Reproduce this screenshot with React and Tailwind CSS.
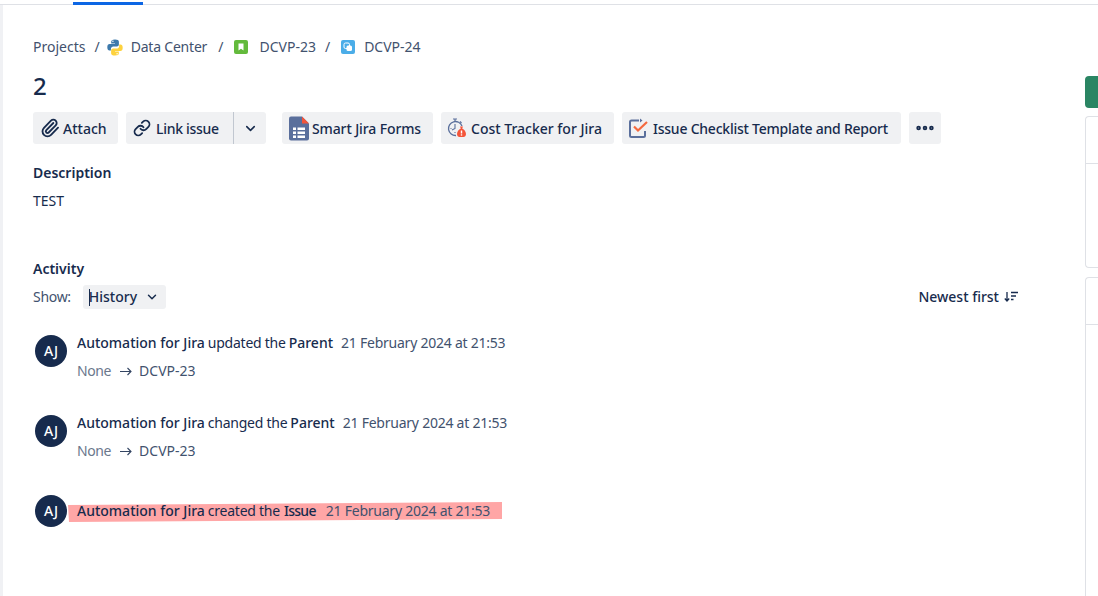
import { Link, Paperclip, ChevronDown, MoreHorizontal, ArrowRight } from "lucide-react";

const FONT = "font-['Noto_Sans',sans-serif]";

function ActionButton({ icon, label, className = "", labelClassName = "" }) {
  return (
    <button className={`flex h-8 items-center rounded-[3px] bg-[#f0f1f3] text-sm font-medium text-[#172b4d] ${className}`}>
      {icon}
      <span className={`pt-px ${labelClassName}`}>{label}</span>
    </button>
  );
}

function PythonIcon() {
  return (
    <svg width="16" height="17" viewBox="0 0 16 17">
      <path d="M8 .5c-3 0-3.800 1-3.800 2.300V4.500H8v.6H2.600C1.200 5.100.3 6.200.3 8.300c0 2.200.9 3.300 2.200 3.300h1.400V9.800c0-1.300 1.100-2.400 2.500-2.400h3.500c1.100 0 2-.9 2-2V2.800C11.900 1.400 10.600.5 8 .5z" fill="#3d79ab" />
      <circle cx="5.900" cy="2.300" r=".7" fill="#fff" />
      <path d="M8 16.500c3 0 3.800-1 3.800-2.300v-1.700H8v-.6h5.400c1.400 0 2.300-1.100 2.300-3.200 0-2.200-.9-3.300-2.200-3.300h-1.400v1.800c0 1.300-1.100 2.400-2.500 2.400H6.100c-1.100 0-2 .9-2 2v2.600c0 1.400 1.300 2.300 3.900 2.300z" fill="#fdd23e" />
      <circle cx="10.100" cy="14.700" r=".7" fill="#fff" />
    </svg>
  );
}

function StoryIcon() {
  return (
    <svg width="14" height="14" viewBox="0 0 14 14">
      <rect width="14" height="14" rx="2" fill="#63ba3c" />
      <path d="M4.500 3.500h5v7L7 8.700l-2.500 1.800z" fill="#fff" />
    </svg>
  );
}

function SubtaskIcon() {
  return (
    <svg width="14" height="14" viewBox="0 0 14 14">
      <rect width="14" height="14" rx="2" fill="#4bade8" />
      <rect x="3" y="3" width="5.500" height="5.500" rx="1.500" fill="none" stroke="#fff" strokeWidth="1" />
      <rect x="5.500" y="5.500" width="5.500" height="5.500" rx="1.500" fill="#fff" />
    </svg>
  );
}

function FormsIcon() {
  return (
    <svg width="20" height="25" viewBox="0 0 20 24">
      <path d="M2 0h11l7 7v15a2 2 0 0 1-2 2H2a2 2 0 0 1-2-2V2a2 2 0 0 1 2-2z" fill="#5a6f9c" />
      <path d="M13 0l7 7h-7z" fill="#f4553a" />
      <path d="M4 11h3v2.500H4zM8.500 11H16v2.500H8.500zM4 15h3v2.500H4zM8.500 15H16v2.500H8.500zM4 19h3v2.500H4zM8.500 19H16v2.500H8.500z" fill="#fff" />
    </svg>
  );
}

function CostIcon() {
  return (
    <svg width="20" height="20" viewBox="0 0 20 20">
      <path d="M6 1h4M8 1v2.500M13 3.500l1.500 1.500" fill="none" stroke="#5a6f9c" strokeWidth="1.200" />
      <path d="M9 17.500A7 7 0 1 1 15 8" fill="none" stroke="#5a6f9c" strokeWidth="1.300" />
      <path d="M8 6v4.500l-3 1.500M3.500 10.500h1M8 14v1" fill="none" stroke="#5a6f9c" strokeWidth="1.100" />
      <path d="M13 8.500h3l-.8 2c2.200 1.200 3.800 3.300 3.800 5.500 0 2-1.200 3-2.500 3h-4c-1.300 0-2.500-1-2.500-3 0-2.200 1.600-4.300 3.800-5.500z" fill="#f4553a" />
      <rect x="13.800" y="12.500" width="1.400" height="3" fill="#fff" />
      <rect x="13.800" y="16.300" width="1.400" height="1.300" fill="#fff" />
    </svg>
  );
}

function ChecklistIcon() {
  return (
    <svg width="20" height="20" viewBox="0 0 20 20">
      <path d="M10 2.500H2.500a1.500 1.500 0 0 0-1.500 1.500v13.500A1.500 1.500 0 0 0 2.500 19h12a1.500 1.500 0 0 0 1.500-1.500V13" fill="none" stroke="#5a6f9c" strokeWidth="2" />
      <path d="M11 .5l2.500 2-2.500 2z" fill="#5a6f9c" />
      <path d="M5 8.500l4 4 9-8.500" fill="none" stroke="#f4693f" strokeWidth="2.200" />
    </svg>
  );
}

function SortIcon() {
  return (
    <svg width="14" height="12" viewBox="0 0 14 12" className="ml-[5px]">
      <path d="M3 1v9M.8 7.500 3 10l2.200-2.500" fill="none" stroke="#172b4d" strokeWidth="1.300" />
      <path d="M7 1.500h7M7 5h5M7 8.500h2.500" fill="none" stroke="#172b4d" strokeWidth="1.300" />
    </svg>
  );
}

function ChangeArrow() {
  return (
    <svg width="12" height="9" viewBox="0 0 12 9" className="ml-[9px] mr-[7px]">
      <path d="M0 4.500h11M7.500 1l3.500 3.500L7.500 8" fill="none" stroke="#344563" strokeWidth="1.100" />
    </svg>
  );
}

function Avatar() {
  return (
    <div className="flex h-8 w-8 shrink-0 items-center justify-center rounded-full bg-[#172b4d] text-sm font-medium text-white">
      AJ
    </div>
  );
}

function HistoryItem({ action, field, change = true }) {
  return (
    <div className="flex h-20 gap-[10px] pl-[2px]">
      <Avatar />
      <div className="text-sm text-[#172b4d]">
        <div className={`flex items-center whitespace-nowrap ${change ? "h-4" : "h-8"}`}>
          <span className="font-medium">Automation for Jira</span>
          <span className="ml-[3px] tracking-[-0.25px]">{action} the</span>
          <span className={`font-medium ${change ? "ml-[3px]" : "ml-1 tracking-[-0.7px]"}`}>{field}</span>
          <span className={`tracking-[-0.24px] text-[#42526e] ${change ? "ml-2" : "ml-[10px]"}`}>21 February 2024 at 21:53</span>
        </div>
        {change ? (
          <div className="mt-3 flex h-4 items-center whitespace-nowrap text-[#6b778c]">
            <span className="tracking-[-0.4px]">None</span>
            <ChangeArrow />
            <span className="text-[#42526e]">DCVP-23</span>
          </div>
        ) : null}
      </div>
    </div>
  );
}

export default function App() {
  return (
    <div className={`flex h-[596px] w-[1098px] flex-col overflow-hidden bg-white ${FONT}`}>
      <div className="h-[5px] shrink-0 border-b border-[#dfe1e6] pl-[73px] pt-[2px]">
        <div className="h-[3px] w-[70px] bg-[#0c66e4]" />
      </div>
      <div className="flex min-h-0 flex-1">
        <div className="w-[3px] shrink-0 bg-[#f0f1f4]" />
        <main className="w-[1082px] shrink-0 pl-[30px] pt-[33px]">
          <nav className="flex h-[18px] items-center whitespace-nowrap text-sm text-[#42526e]">
            <span>Projects</span>
            <span className="ml-[9px] mr-[7px]">/</span>
            <PythonIcon />
            <span className="ml-2 tracking-[-0.2px]">Data Center</span>
            <span className="mx-[11px]">/</span>
            <StoryIcon />
            <span className="ml-[11px]">DCVP-23</span>
            <span className="ml-[9px] mr-[11px]">/</span>
            <SubtaskIcon />
            <span className="ml-[9px]">DCVP-24</span>
          </nav>

          <h1 className="mt-4 h-7 text-2xl font-medium leading-7 text-[#172b4d]">2</h1>

          <div className="mt-3 flex items-center whitespace-nowrap">
            <ActionButton icon={<Paperclip size={20} strokeWidth={2.200} className="mr-[3px]" />} label="Attach" className="w-[85px] pl-[7px]" />
            <div className="ml-2 flex h-8 items-stretch text-[#172b4d]">
              <ActionButton icon={<Link size={18} strokeWidth={2.400} className="mr-[5px]" />} label="Link issue" labelClassName="tracking-[-0.3px]" className="w-[107px] rounded-r-none pl-[7px]" />
              <div className="w-[1px] bg-[#c1c7d0]" />
              <button className="flex w-8 items-center justify-center rounded-r-[3px] bg-[#f0f1f3]">
                <ChevronDown size={15} strokeWidth={2.500} />
              </button>
            </div>
            <ActionButton icon={<span className="mr-[3px]"><FormsIcon /></span>} label="Smart Jira Forms" labelClassName="tracking-[-0.12px]" className="ml-4 w-[151px] pl-[7px]" />
            <ActionButton icon={<span className="mr-[4px] flex"><CostIcon /></span>} label="Cost Tracker for Jira" className="ml-2 w-[173px] pl-[6px]" />
            <ActionButton icon={<span className="mr-[4px] flex"><ChecklistIcon /></span>} label="Issue Checklist Template and Report" labelClassName="tracking-[-0.23px]" className="ml-2 w-[279px] pl-[7px]" />
            <button className="ml-2 flex h-8 w-8 items-center justify-center rounded-[3px] bg-[#f0f1f3] text-[#172b4d]">
              <MoreHorizontal size={22} strokeWidth={3} />
            </button>
          </div>

          <h2 className="mt-[21px] h-4 text-sm font-semibold leading-4 text-[#172b4d]">Description</h2>
          <p className="mt-3 h-4 text-sm leading-4 text-[#172b4d]">TEST</p>

          <h2 className="mt-[52px] h-4 text-sm font-semibold leading-4 text-[#172b4d]">Activity</h2>
          <div className="mt-[8px] flex h-6 w-[985px] items-center text-sm text-[#42526e]">
            <span className="tracking-[-0.3px]">Show:</span>
            <button className="ml-3 flex h-6 w-[83px] items-center rounded-[3px] bg-[#f0f1f3] pl-[6px] font-medium text-[#172b4d]">
              <span className="h-[17px] w-px bg-[#172b4d]" />
              <span className="-ml-[1px]">History</span>
              <ChevronDown size={14} strokeWidth={2.500} className="ml-[8px]" />
            </button>
            <button className="ml-auto flex items-center font-medium text-[#172b4d]">
              Newest first
              <SortIcon />
            </button>
          </div>

          <div className="mt-[26px]">
            <HistoryItem action="updated" field="Parent" />
            <HistoryItem action="changed" field="Parent" />
            <div className="relative">
              <svg className="absolute left-[35px] top-[7px]" width="436" height="22" viewBox="0 0 436 22">
                <polygon points="0,3 434,0 434,17 1,20" fill="#ffa6a6" />
              </svg>
              <div className="relative">
                <HistoryItem action="created" field="Issue" change={false} />
              </div>
            </div>
          </div>
        </main>

        <aside className="flex-1 pt-[71px]">
          <div className="h-8 rounded-l-[4px] bg-[#2a8563]" />
          <div className="mt-2 h-[152px] rounded-l-[4px] border-y border-l border-[#dfe1e6] pt-[46px]">
            <div className="h-px bg-[#dfe1e6]" />
          </div>
          <div className="mt-[9px] h-[400px] rounded-l-[4px] border-y border-l border-[#dfe1e6] pt-[46px]">
            <div className="h-px bg-[#dfe1e6]" />
          </div>
        </aside>
      </div>
    </div>
  );
}
